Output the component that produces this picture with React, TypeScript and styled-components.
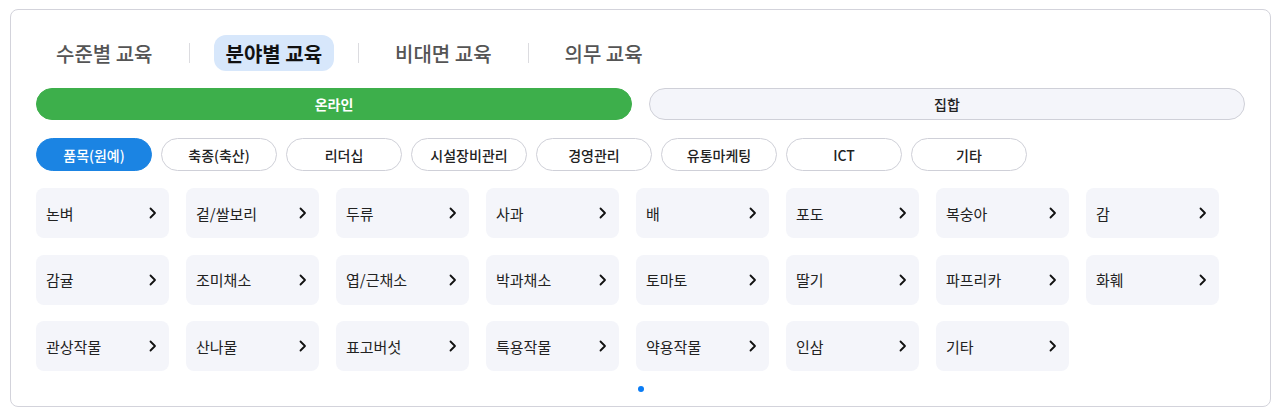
import React, { useState } from 'react';
import styled, { createGlobalStyle, css } from 'styled-components';

const GlobalStyle = createGlobalStyle`
  body {
    margin: 0;
    background: #fff;
    font-family: "Noto Sans CJK KR", "Noto Sans", sans-serif;
  }
`;

const Page = styled.div`
  padding: 9px 11px 0 10px;
`;

const Card = styled.section`
  box-sizing: border-box;
  height: 398px;
  border: 1px solid #d3d3db;
  border-radius: 8px;
  padding: 25px 25px 0;
  display: flex;
  flex-direction: column;
`;

const TabList = styled.nav`
  display: flex;
  align-items: center;
  padding-left: 8px;
  height: 36px;
`;

const Divider = styled.span`
  width: 1px;
  height: 20px;
  background: #dcdce0;
  margin: 0 24px;
`;

const Tab = styled.button<{ $active?: boolean }>`
  border: 0;
  background: transparent;
  font-family: inherit;
  font-size: 20px;
  font-weight: 500;
  color: #555;
  height: 36px;
  padding: 0 12px;
  border-radius: 12px;
  cursor: pointer;
  ${(p) =>
    p.$active &&
    css`
      background: #d7e7fb;
      color: #111;
      font-weight: 700;
    `}
`;

const Segments = styled.div`
  display: grid;
  grid-template-columns: 1fr 1fr;
  column-gap: 17px;
  margin-top: 17px;
`;

const Segment = styled.button<{ $active?: boolean }>`
  box-sizing: border-box;
  height: 32px;
  border-radius: 16px;
  font-family: inherit;
  font-size: 14px;
  font-weight: 500;
  color: #222;
  background: #f4f5fa;
  border: 1px solid #cfd0d8;
  cursor: pointer;
  ${(p) =>
    p.$active &&
    css`
      background: #3daf4b;
      border-color: #3daf4b;
      color: #fff;
      font-weight: 700;
    `}
`;

const Chips = styled.div`
  display: flex;
  gap: 9px;
  margin-top: 18px;
`;

const Chip = styled.button<{ $active?: boolean }>`
  box-sizing: border-box;
  width: 116px;
  height: 33px;
  border-radius: 17px;
  border: 1px solid #cfd0d8;
  background: #fff;
  font-family: inherit;
  font-size: 14px;
  font-weight: 500;
  color: #222;
  cursor: pointer;
  ${(p) =>
    p.$active &&
    css`
      background: #1b84e3;
      border-color: #1b84e3;
      color: #fff;
    `}
`;

const Grid = styled.div`
  display: grid;
  grid-template-columns: repeat(8, 133px);
  grid-auto-rows: 50px;
  column-gap: 17px;
  row-gap: 16.5px;
  margin-top: 17px;
`;

const Tile = styled.a`
  display: flex;
  align-items: center;
  justify-content: space-between;
  padding: 0 12px 0 10px;
  background: #f4f5fa;
  border-radius: 8px;
  font-size: 15px;
  color: #222;
  text-decoration: none;
  cursor: pointer;
`;

const Pager = styled.div`
  display: flex;
  justify-content: center;
  margin-top: 15px;
`;

const Dot = styled.span`
  width: 6px;
  height: 6px;
  border-radius: 50%;
  background: #0a7cf5;
`;

const Chevron = () => (
  <svg width="8" height="12" viewBox="0 0 8 12" fill="none">
    <path d="M1.5 1.5 6 6l-4.5 4.5" stroke="#111" strokeWidth="1.8" strokeLinecap="round" strokeLinejoin="round" />
  </svg>
);

const tabs = ['수준별 교육', '분야별 교육', '비대면 교육', '의무 교육'];
const chips = ['품목(원예)', '축종(축산)', '리더십', '시설장비관리', '경영관리', '유통마케팅', 'ICT', '기타'];
const crops = [
  '논벼', '겉/쌀보리', '두류', '사과', '배', '포도', '복숭아', '감',
  '감귤', '조미채소', '엽/근채소', '박과채소', '토마토', '딸기', '파프리카', '화훼',
  '관상작물', '산나물', '표고버섯', '특용작물', '약용작물', '인삼', '기타',
];

export default function App() {
  const [tab, setTab] = useState(1);
  const [mode, setMode] = useState(0);
  const [chip, setChip] = useState(0);

  return (
    <Page>
      <GlobalStyle />
      <Card>
        <TabList>
          {tabs.map((t, i) => (
            <React.Fragment key={t}>
              {i > 0 && <Divider />}
              <Tab $active={tab === i} onClick={() => setTab(i)}>
                {t}
              </Tab>
            </React.Fragment>
          ))}
        </TabList>

        <Segments>
          {['온라인', '집합'].map((s, i) => (
            <Segment key={s} $active={mode === i} onClick={() => setMode(i)}>
              {s}
            </Segment>
          ))}
        </Segments>

        <Chips>
          {chips.map((c, i) => (
            <Chip key={c} $active={chip === i} onClick={() => setChip(i)}>
              {c}
            </Chip>
          ))}
        </Chips>

        <Grid>
          {crops.map((c, i) => (
            <Tile key={`${c}-${i}`}>
              <span>{c}</span>
              <Chevron />
            </Tile>
          ))}
        </Grid>

        <Pager>
          <Dot />
        </Pager>
      </Card>
    </Page>
  );
}
